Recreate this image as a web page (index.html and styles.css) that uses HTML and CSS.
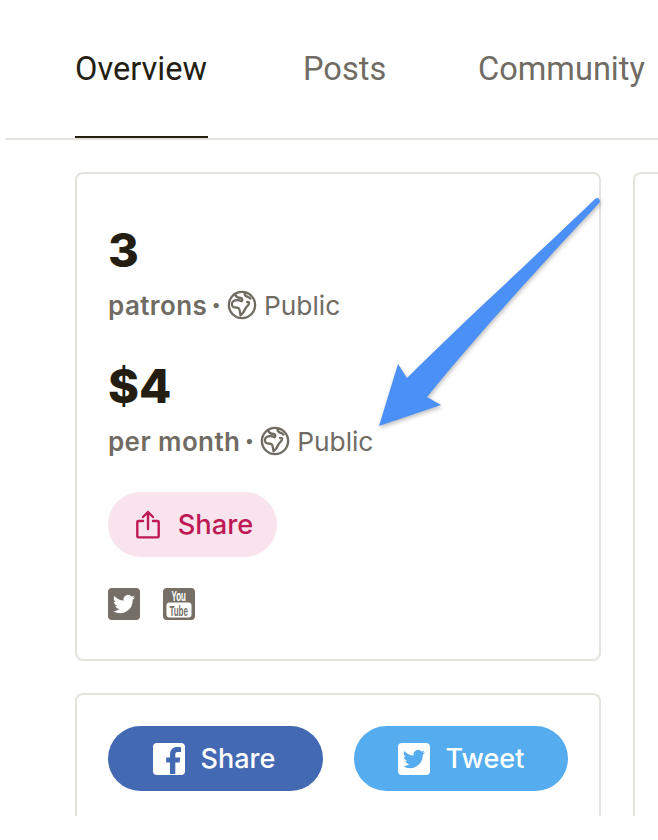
FILE: index.html
```html
<!DOCTYPE html>
<html lang="en">
<head>
<meta charset="utf-8">
<title>Overview</title>
<link rel="stylesheet" href="styles.css">
</head>
<body>
<div class="page">
<nav class="tabs">
  <a class="tab active">Overview</a>
  <a class="tab posts">Posts</a>
  <a class="tab">Community</a>
</nav>
<main class="columns">
  <div class="left">
    <section class="card stats">
      <div class="big">3</div>
      <div class="sub"><b>patrons</b><span class="dot">·</span><svg class="globe" viewBox="0 0 32 32"><use href="#g"/></svg><span>Public</span></div>
      <div class="big second">$4</div>
      <div class="sub"><b>per month</b><span class="dot">·</span><svg class="globe" viewBox="0 0 32 32"><use href="#g"/></svg><span>Public</span></div>
      <a class="share-btn">
        <svg class="share-icon" viewBox="0 0 24 30" fill="none" stroke="#bd1a55" stroke-width="2.4" stroke-linecap="round" stroke-linejoin="round"><path d="M7 11H2.500a1.200 1.200 0 0 0-1.200 1.200v14a1.200 1.200 0 0 0 1.200 1.200h19a1.200 1.200 0 0 0 1.200-1.200v-14a1.200 1.200 0 0 0-1.200-1.200H17"/><path d="M12 19V2M7 7l5-5 5 5"/></svg>
        Share
      </a>
      <div class="socials">
        <svg class="social" viewBox="0 0 32 32"><rect width="32" height="32" rx="4" fill="#756f68"/><path fill="#fff" d="M27 9.200c-.8.400-1.700.6-2.600.7.900-.6 1.600-1.400 2-2.500-.9.500-1.800.9-2.900 1.100a4.500 4.500 0 0 0-7.800 4.100c-3.800-.2-7.100-2-9.300-4.700-.4.700-.6 1.500-.6 2.300 0 1.600.8 3 2 3.800-.7 0-1.400-.2-2-.6v.1c0 2.200 1.600 4 3.600 4.400-.7.200-1.400.2-2 .1.600 1.800 2.200 3.100 4.200 3.100A9 9 0 0 1 5 23.100 12.800 12.800 0 0 0 24.700 11.700c.9-.6 1.700-1.500 2.300-2.500z"/></svg>
        <svg class="social" viewBox="0 0 32 32"><rect width="32" height="32" rx="4" fill="#756f68"/><rect x="3.500" y="14.500" width="25" height="15" rx="3" fill="#fff"/><text class="yt-you" transform="translate(8.500 13) scale(.53 1)">You</text><text class="yt-tube" transform="translate(6.500 27.500) scale(.53 1)">Tube</text></svg>
      </div>
    </section>
    <section class="card actions">
      <a class="pill fb">
        <svg class="pill-icon" viewBox="0 0 32 32"><rect width="32" height="32" rx="4" fill="#fff"/><path fill="#4469b3" d="M22.300 31V19.600h4.300l.6-5H22.300v-3.100c0-1.500.4-2.500 2.400-2.500H28V4.300c-.6-.1-2.200-.3-3.800-.3-4.100 0-7.200 2.600-7.200 7.400v3.200h-3.800v5H17V31z"/></svg>
        Share
      </a>
      <a class="pill tw">
        <svg class="pill-icon" viewBox="0 0 32 32"><rect width="32" height="32" rx="4" fill="#fff"/><path fill="#55acee" d="M27 9.200c-.8.400-1.700.6-2.600.7.900-.6 1.600-1.400 2-2.500-.9.500-1.800.9-2.900 1.100a4.500 4.500 0 0 0-7.800 4.100c-3.800-.2-7.100-2-9.300-4.700-.4.700-.6 1.500-.6 2.300 0 1.600.8 3 2 3.800-.7 0-1.400-.2-2-.6v.1c0 2.200 1.600 4 3.600 4.400-.7.200-1.400.2-2 .1.600 1.800 2.200 3.100 4.200 3.100A9 9 0 0 1 5 23.100 12.800 12.800 0 0 0 24.700 11.700c.9-.6 1.700-1.500 2.300-2.500z"/></svg>
        Tweet
      </a>
    </section>
  </div>
  <div class="card right"></div>
</main>
</div>
<svg class="arrow" viewBox="0 0 240 240"><path fill="#4a90f7" d="M9 236 L28 174 L37 188 C90 135 170 62 225 9 Q229 6 230 12 C190 55 120 130 57 207 L71 215 Z"/></svg>
<svg class="defs" width="0" height="0"><defs><g id="g" fill="none" stroke="#706c64" stroke-width="2.500" stroke-linejoin="round"><circle cx="16" cy="16" r="14"/><path d="M8.500 4.500c1 2.500 3.500 4 6 4 2 0 2.500 2.500 1 3.500-2-1-5-2-8-.5-2.500 1.500-3 4-1.500 6 1.500 1.800 5 .5 6.500 2 1.500 1.500 1 4 2 7.500 2.500-2 4-4.500 5-7 .8-2 3-3 4-5.500.5-1.500-1-2-3-1.500"/><path d="M19 3c-.5 2 .5 3.500 2.500 4 1.500.4 3 1 4 3"/></g></defs></svg>
</body>
</html>
```
FILE: styles.css
```css
* { box-sizing: border-box; }
html, body { margin: 0; height: 840px; overflow: hidden; background: #fff; }
body { position: relative; font-family: "Inter", "Liberation Sans", sans-serif; color: #241e12; }
.page { height: 816px; display: flex; flex-direction: column; }
.tabs {
  display: flex;
  gap: 95px;
  margin-left: 5px;
  padding: 48px 0 0 70px;
  height: 140px;
  flex: none;
  border-bottom: 2px solid #e5e3dd;
  white-space: nowrap;
}
.tab {
  height: 90px;
  font-family: "Roboto", sans-serif;
  font-size: 32.6px;
  line-height: 42px;
  color: #706c64;
}
.tab.active { color: #241e12; border-bottom: 2px solid #241e12; min-width: 133px; }
.posts { width: 80px; }
.columns { flex: 1; min-height: 0; display: flex; gap: 32px; padding: 32px 0 0 75px; }
.left { width: 526px; display: flex; flex-direction: column; gap: 32px; flex: none; }
.card { border: 2px solid #e5e3dd; border-radius: 8px; background: #fff; }
.stats { height: 489px; padding: 52px 31px 0; }
.big { font-size: 47px; font-weight: 800; line-height: 48px; color: #241e12; }
.second { margin-top: 39px; }
.sub { display: flex; align-items: center; margin-top: 13px; height: 36px; font-size: 26.3px; color: #706c64; }
.sub b { font-size: 26px; font-weight: 600; letter-spacing: .4px; }
.dot { font-weight: 900; margin: 0 6px 0 4px; }
.globe { width: 30px; height: 30px; margin-right: 7px; }
.share-btn {
  display: flex; align-items: center; justify-content: center; gap: 18px;
  width: 169px; height: 65px; margin-top: 33px; padding-left: 4px;
  border-radius: 33px; background: #f9e3ec; color: #bd1a55;
  font-size: 27.3px; font-weight: 500;
}
.share-icon { width: 24px; height: 30px; }
.socials { display: flex; gap: 23px; margin-top: 31px; }
.social { width: 32px; height: 32px; }
.yt-you { font: 700 15px "Liberation Sans", sans-serif; fill: #fff; }
.yt-tube { font: 700 15px "Liberation Sans", sans-serif; fill: #756f68; }
.actions { flex: 1; display: flex; gap: 31px; padding: 31px 31px 0; border-bottom: 0; border-radius: 8px 8px 0 0; }
.pill {
  display: flex; align-items: center; justify-content: center; gap: 16px;
  height: 65px; border-radius: 33px; color: #fff;
  font-size: 27px; font-weight: 500;
}
.pill-icon { width: 32px; height: 32px; }
.fb { width: 215px; padding-right: 3px; background: #4469b3; }
.tw { width: 214px; background: #55acee; }
.right { flex: 1; border-right: 0; border-bottom: 0; border-radius: 8px 0 0 0; }
.arrow { position: absolute; left: 370px; top: 190px; width: 240px; height: 240px; filter: drop-shadow(1px 2px 2px rgba(40,40,40,.3)); }
.defs { position: absolute; }
```
